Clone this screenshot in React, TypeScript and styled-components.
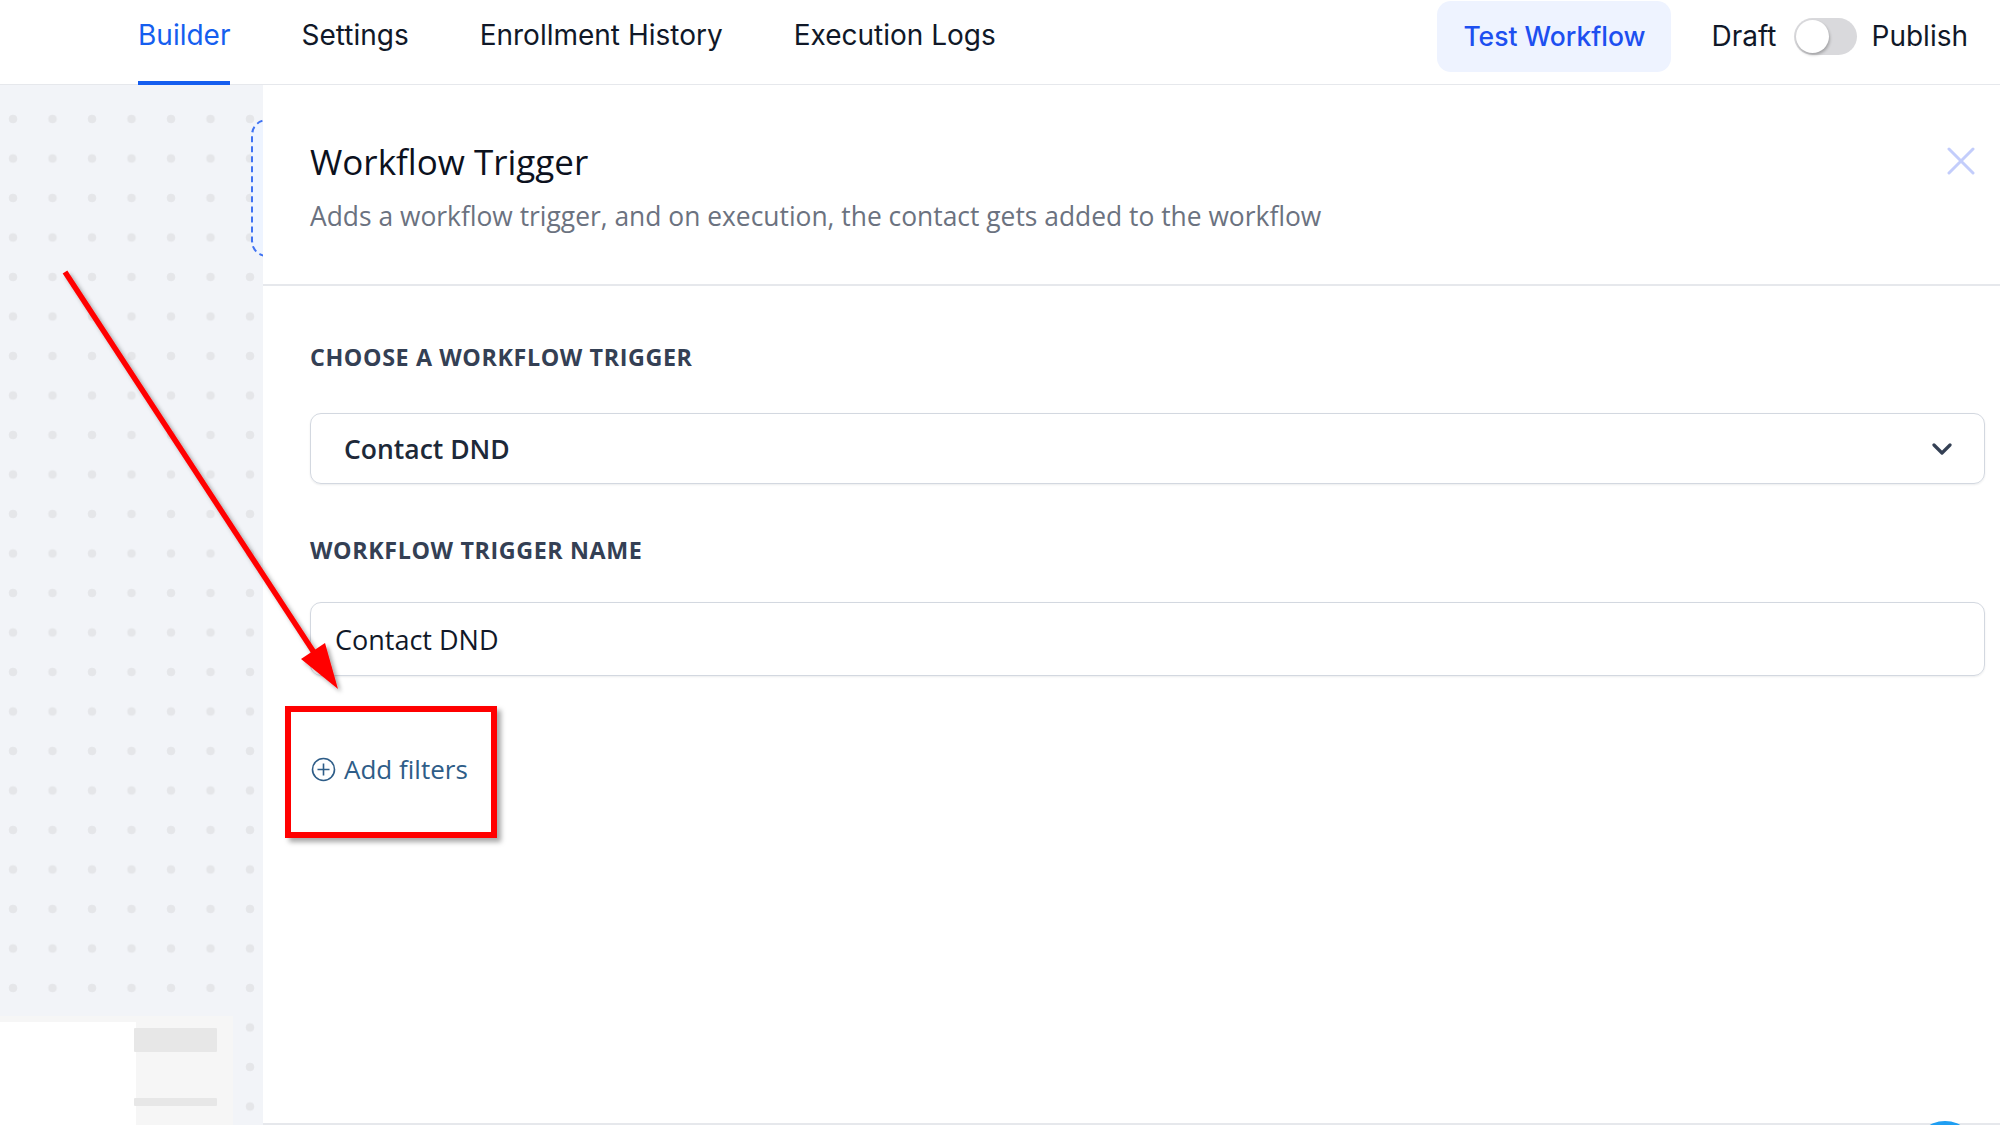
import React from "react";
import styled, { createGlobalStyle } from "styled-components";

const Global = createGlobalStyle`
  html, body { margin: 0; padding: 0; background: #ffffff; }
  body { font-family: "Open Sans", "Noto Sans", sans-serif; }
  * { box-sizing: border-box; }
`;

const Shell = styled.div`
  position: relative;
  width: 2000px;
  height: 1125px;
  overflow: hidden;
  display: flex;
  flex-direction: column;
  background: #ffffff;
`;

const TopBar = styled.header`
  height: 85px;
  flex: none;
  display: flex;
  align-items: stretch;
  justify-content: space-between;
  border-bottom: 1px solid #e6e8ec;
  padding: 0 32px 0 138px;
  background: #ffffff;
`;

const Tabs = styled.nav`
  display: flex;
  align-items: stretch;
  gap: 71px;
`;

const Tab = styled.div<{ $active?: boolean }>`
  position: relative;
  display: flex;
  align-items: center;
  padding-bottom: 12px;
  font-family: Inter, "Noto Sans", sans-serif;
  font-size: 28px;
  font-weight: 400;
  color: ${(p) => (p.$active ? "#155eef" : "#101828")};
  border-bottom: 4px solid ${(p) => (p.$active ? "#155eef" : "transparent")};
  margin-bottom: -1px;
`;

const Actions = styled.div`
  display: flex;
  align-items: center;
  padding-bottom: 12px;
`;

const TestButton = styled.button`
  height: 71px;
  width: 234px;
  border: none;
  border-radius: 14px;
  background: #eef3ff;
  color: #1d4ff0;
  font-family: Inter, "Noto Sans", sans-serif;
  font-size: 26.5px;
  font-weight: 500;
  margin-right: 40px;
  padding: 0;
`;

const ToggleLabel = styled.span`
  font-family: Inter, "Noto Sans", sans-serif;
  font-size: 28px;
  color: #101828;
`;

const Toggle = styled.div`
  width: 63px;
  height: 37px;
  border-radius: 19px;
  background: #d9d9dc;
  margin: 0 15px 0 17px;
  padding: 2px;
  display: flex;
  align-items: center;
`;

const Knob = styled.div`
  width: 33px;
  height: 33px;
  border-radius: 50%;
  background: #ffffff;
  box-shadow: 1px 2px 3px rgba(0, 0, 0, 0.25);
`;

const Main = styled.div`
  flex: 1;
  display: flex;
  min-height: 0;
`;

const Canvas = styled.div`
  position: relative;
  width: 263px;
  flex: none;
  overflow: hidden;
  background-color: #f2f4f8;
  background-image: radial-gradient(circle, #e5e6e9 4px, transparent 4.6px);
  background-size: 39.5px 39.5px;
  background-position: -6.75px 14.25px;
`;

const CanvasNode = styled.div`
  position: absolute;
  left: 251px;
  top: 34px;
  width: 220px;
  height: 138px;
  border: 2px dashed #3f72f2;
  border-radius: 16px;
  background: #eef4ff;
`;

const MiniMap = styled.div`
  position: absolute;
  left: 0;
  bottom: 0;
  width: 233px;
  height: 109px;
  background: #f6f6f6;
  display: flex;
  align-items: flex-start;
`;

const MiniWhite = styled.div`
  width: 136px;
  height: 103px;
  margin-top: 6px;
  background: #ffffff;
  flex: none;
`;

const MiniBars = styled.div`
  display: flex;
  flex-direction: column;
  gap: 46px;
  padding-top: 12px;
  margin-left: -2px;
`;

const MiniBar = styled.div<{ $h: number }>`
  width: 83px;
  height: ${(p) => p.$h}px;
  background: #e7e7e7;
  border-radius: 1px;
`;

const Panel = styled.section`
  flex: 1;
  display: flex;
  flex-direction: column;
  background: #ffffff;
  border-bottom: 2px solid #e6e8ec;
`;

const PanelHead = styled.div`
  position: relative;
  height: 201px;
  flex: none;
  border-bottom: 2px solid #e6e8ec;
  padding: 55px 0 0 47px;
`;

const Title = styled.h2`
  margin: 0;
  font-family: "Open Sans", sans-serif;
  font-size: 35px;
  line-height: 44px;
  font-weight: 500;
  color: #0c111d;
`;

const Subtitle = styled.p`
  margin: 14px 0 0;
  font-family: "Open Sans", sans-serif;
  font-size: 26.4px;
  line-height: 36px;
  font-weight: 400;
  color: #6b7280;
`;

const CloseBtn = styled.div`
  position: absolute;
  right: 25px;
  top: 62px;
  width: 28px;
  height: 28px;
  display: flex;
  align-items: center;
  justify-content: center;
`;

const Body = styled.div`
  padding: 55px 15px 0 47px;
  display: flex;
  flex-direction: column;
`;

const Label = styled.div<{ $mt?: number }>`
  font-family: "Open Sans", sans-serif;
  font-size: 23.3px;
  line-height: 32px;
  font-weight: 700;
  letter-spacing: 0.6px;
  color: #344054;
  margin-top: ${(p) => p.$mt ?? 0}px;
`;

const Field = styled.div<{ $select?: boolean; $mt: number }>`
  margin-top: ${(p) => p.$mt}px;
  height: ${(p) => (p.$select ? 71 : 74)}px;
  border: 1.5px solid #d3d8e0;
  border-radius: 11px;
  box-shadow: 0 1px 2px rgba(16, 24, 40, 0.08);
  display: flex;
  align-items: center;
  justify-content: space-between;
  padding: 0 32px 0 ${(p) => (p.$select ? 33 : 24)}px;
  font-family: "Open Sans", sans-serif;
  font-size: ${(p) => (p.$select ? 26.5 : 27)}px;
  font-weight: ${(p) => (p.$select ? 600 : 400)};
  color: ${(p) => (p.$select ? "#1d2939" : "#101828")};
`;

const AddFilters = styled.div`
  margin-top: 75px;
  margin-left: 1px;
  display: flex;
  align-items: center;
  gap: 8px;
  font-family: "Open Sans", sans-serif;
  font-size: 26px;
  color: #2e5d88;
`;

const Annotation = styled.svg`
  position: absolute;
  left: 0;
  top: 0;
  pointer-events: none;
`;

const RedBox = styled.div`
  position: absolute;
  left: 285px;
  top: 706px;
  width: 212px;
  height: 132px;
  border: 6px solid #ff0000;
  box-shadow: 4px 4px 5px rgba(0, 0, 0, 0.35);
  pointer-events: none;
`;

const ChatBubble = styled.div`
  position: absolute;
  left: 1914px;
  top: 1121px;
  width: 62px;
  height: 62px;
  border-radius: 50%;
  background: #1f9ef2;
`;

export default function App() {
  return (
    <Shell>
      <Global />
      <TopBar>
        <Tabs>
          <Tab $active>Builder</Tab>
          <Tab>Settings</Tab>
          <Tab>Enrollment History</Tab>
          <Tab>Execution Logs</Tab>
        </Tabs>
        <Actions>
          <TestButton>Test Workflow</TestButton>
          <ToggleLabel>Draft</ToggleLabel>
          <Toggle>
            <Knob />
          </Toggle>
          <ToggleLabel>Publish</ToggleLabel>
        </Actions>
      </TopBar>
      <Main>
        <Canvas>
          <CanvasNode />
          <MiniMap>
            <MiniWhite />
            <MiniBars>
              <MiniBar $h={24} />
              <MiniBar $h={8} />
            </MiniBars>
          </MiniMap>
        </Canvas>
        <Panel>
          <PanelHead>
            <Title>Workflow Trigger</Title>
            <Subtitle>
              Adds a workflow trigger, and on execution, the contact gets added to the workflow
            </Subtitle>
            <CloseBtn>
              <svg width="28" height="28" viewBox="0 0 28 28">
                <path d="M2 2 L26 26 M26 2 L2 26" stroke="#c3cdfb" strokeWidth="3" strokeLinecap="round" />
              </svg>
            </CloseBtn>
          </PanelHead>
          <Body>
            <Label>CHOOSE A WORKFLOW TRIGGER</Label>
            <Field $select $mt={40}>
              <span>Contact DND</span>
              <svg width="20" height="12" viewBox="0 0 20 12">
                <path d="M2 2 L10 10 L18 2" fill="none" stroke="#344054" strokeWidth="3.2" strokeLinecap="round" strokeLinejoin="round" />
              </svg>
            </Field>
            <Label $mt={50}>WORKFLOW TRIGGER NAME</Label>
            <Field $mt={36}>
              <span>Contact DND</span>
            </Field>
            <AddFilters>
              <svg width="25" height="25" viewBox="0 0 25 25">
                <circle cx="12.5" cy="12.5" r="11" fill="none" stroke="#2e5d88" strokeWidth="1.6" />
                <path d="M12.5 6.5 V18.5 M6.5 12.5 H18.5" stroke="#2e5d88" strokeWidth="1.6" />
              </svg>
              <span>Add filters</span>
            </AddFilters>
          </Body>
        </Panel>
      </Main>
      <Annotation width="2000" height="1125" viewBox="0 0 2000 1125">
        <defs>
          <filter id="sh" x="-20%" y="-20%" width="140%" height="140%">
            <feDropShadow dx="3" dy="3" stdDeviation="2" floodColor="#000" floodOpacity="0.35" />
          </filter>
        </defs>
        <g filter="url(#sh)">
          <line x1="65" y1="272" x2="315" y2="654" stroke="#ff0000" strokeWidth="5.5" strokeLinecap="butt" />
          <polygon points="338,689 325,643 301,659" fill="#ff0000" />
        </g>
      </Annotation>
      <RedBox />
      <ChatBubble />
    </Shell>
  );
}
